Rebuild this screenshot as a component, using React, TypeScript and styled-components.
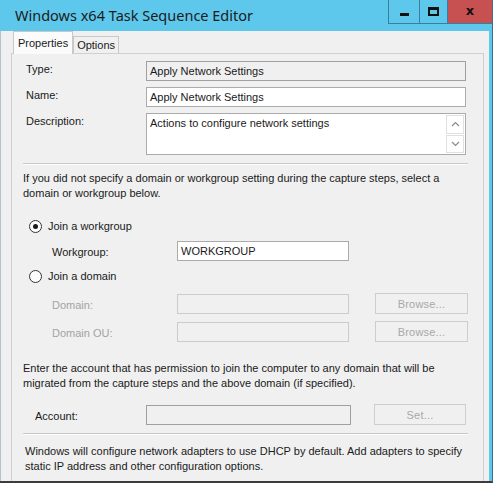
import React from 'react';
import styled, { createGlobalStyle } from 'styled-components';

const GlobalStyle = createGlobalStyle`
  html, body {
    margin: 0;
    padding: 0;
    background: #ffffff;
  }
  body {
    font-family: 'Liberation Sans', Arial, sans-serif;
    font-size: 11px;
    color: #1a1a1a;
  }
`;

const Window = styled.div`
  width: 492px;
  height: 481px;
  display: flex;
  flex-direction: column;
  background: #5ec8ec;
  border-right: 1px solid #3b6f86;
  border-bottom: 2px solid #3c3c3c;
  overflow: hidden;
`;

const TitleBar = styled.div`
  height: 31px;
  display: flex;
  align-items: flex-start;
  justify-content: space-between;
  flex-shrink: 0;
`;

const Title = styled.div`
  font-family: 'Noto Sans', 'Open Sans', sans-serif;
  font-size: 14.5px;
  line-height: 31px;
  padding-left: 15px;
  color: #1b1b1b;
`;

const Controls = styled.div`
  display: flex;
  flex-shrink: 0;
  height: 23px;
  border-left: 1px solid #3a7f9e;
  border-bottom: 1px solid #3a7f9e;
`;

const CtrlButton = styled.div<{ $w: number; $danger?: boolean }>`
  width: ${p => p.$w}px;
  flex-shrink: 0;
  height: 23px;
  display: flex;
  align-items: center;
  justify-content: center;
  background-color: ${p => (p.$danger ? '#c75050' : '#5ec8ec')};
  border-right: 1px solid #3a7f9e;
  &:last-child {
    border-right: none;
  }
`;

const MinGlyph = styled.div`
  width: 9px;
  height: 3px;
  margin-top: 5px;
  background: #111;
`;

const MaxGlyph = styled.div`
  width: 7px;
  height: 4px;
  border: 2px solid #111;
  border-top-width: 3px;
`;

const CloseGlyph = styled.div`
  font-family: 'DejaVu Sans', sans-serif;
  font-weight: 700;
  font-size: 13px;
  color: #111;
  line-height: 1;
  margin-top: -2px;
`;

const Body = styled.div`
  flex: 1;
  display: flex;
  flex-direction: column;
  background: #f0f0f0;
  border-left: 1px solid #b5c4cc;
  border-right: 3px solid #5ec8ec;
  padding: 0 5px 0 10px;
`;

const TabStrip = styled.div`
  display: flex;
  align-items: flex-end;
  height: 22px;
  padding-left: 2px;
`;

const Tab = styled.div<{ $active?: boolean }>`
  height: ${p => (p.$active ? 22 : 16)}px;
  padding: 0 ${p => (p.$active ? 4 : 3)}px;
  display: flex;
  align-items: center;
  border: 1px solid #c8c8c8;
  border-bottom: none;
  background: ${p => (p.$active ? '#fbfbfb' : '#f0f0f0')};
  margin-bottom: ${p => (p.$active ? -1 : 0)}px;
  position: relative;
  z-index: ${p => (p.$active ? 1 : 0)};
  color: #1a1a1a;
`;

const Panel = styled.div`
  flex: 1;
  border: 1px solid #d0d0d0;
  border-bottom: none;
  background: #f0f0f0;
  padding: 7px 15px 0 11px;
  display: flex;
  flex-direction: column;
`;

const FieldGrid = styled.div`
  display: grid;
  grid-template-columns: 120px 320px;
  row-gap: 6px;
  padding-left: 3px;
`;

const Label = styled.div<{ $disabled?: boolean }>`
  padding-top: 2px;
  color: ${p => (p.$disabled ? '#a3a3a3' : '#1a1a1a')};
`;

const TextBox = styled.div<{ $h?: number; $variant?: 'normal' | 'readonly' | 'disabled' }>`
  box-sizing: border-box;
  width: 100%;
  height: ${p => p.$h || 20}px;
  padding: 2px 3px;
  line-height: 14px;
  border: 1px solid
    ${p => (p.$variant === 'disabled' ? '#cccccc' : p.$variant === 'readonly' ? '#a0a0a0' : '#ababab')};
  background: ${p => (p.$variant === 'normal' || !p.$variant ? '#ffffff' : '#f0f0f0')};
  color: #1a1a1a;
`;

const TextArea = styled(TextBox)`
  display: flex;
  justify-content: space-between;
  padding: 2px 1px 1px 3px;
`;

const ScrollBar = styled.div`
  width: 18px;
  display: flex;
  flex-direction: column;
  gap: 1px;
  margin-top: -1px;
`;

const ScrollBtn = styled.div`
  flex: 1;
  display: flex;
  align-items: center;
  justify-content: center;
  border: 1px solid #e0e0e0;
  background: #ffffff;
`;

const Separator = styled.div<{ $top: number; $bottom: number }>`
  height: 1px;
  background: #c8c8c8;
  border-bottom: 1px solid #fcfcfc;
  margin: ${p => p.$top}px 0 ${p => p.$bottom}px 0;
`;

const Para = styled.p<{ $mt?: number; $indent?: number }>`
  margin: ${p => p.$mt || 0}px 0 0 ${p => p.$indent || 0}px;
  line-height: 14.5px;
  color: #1a1a1a;
`;

const RadioRow = styled.label<{ $mt: number }>`
  display: flex;
  align-items: center;
  gap: 6px;
  margin: ${p => p.$mt}px 0 0 6px;
  height: 14px;
`;

const RadioCircle = styled.span<{ $checked?: boolean }>`
  box-sizing: border-box;
  width: 13px;
  height: 13px;
  border-radius: 50%;
  border: 1px solid #333;
  background: #fff;
  display: flex;
  align-items: center;
  justify-content: center;
  &::after {
    content: '';
    width: 5px;
    height: 5px;
    border-radius: 50%;
    background: ${p => (p.$checked ? '#1a1a1a' : 'transparent')};
  }
`;

const SubGrid = styled.div<{ $mt: number }>`
  display: grid;
  grid-template-columns: 125px 172px 119px;
  row-gap: 7px;
  margin: ${p => p.$mt}px 0 0 29px;
  align-items: center;
`;

const AccountGrid = styled.div`
  display: grid;
  grid-template-columns: 111px 205px 115px;
  margin: 14px 0 0 12px;
  align-items: center;
`;

const Button = styled.div<{ $gap: number }>`
  box-sizing: border-box;
  height: 21px;
  margin-left: ${p => p.$gap}px;
  display: flex;
  align-items: center;
  justify-content: center;
  border: 1px solid #cdcdcd;
  background: #f0f0f0;
  color: #a8a8a8;
  letter-spacing: 0.2px;
`;

const Chevron: React.FC<{ up?: boolean }> = ({ up }) => (
  <svg width="9" height="6" viewBox="0 0 9 6">
    <path
      d={up ? 'M1 5 L4.5 1.5 L8 5' : 'M1 1 L4.5 4.5 L8 1'}
      fill="none"
      stroke="#8a8a8a"
      strokeWidth="1.2"
    />
  </svg>
);

const App: React.FC = () => {
  return (
    <>
      <GlobalStyle />
      <Window>
        <TitleBar>
          <Title>Windows x64 Task Sequence Editor</Title>
          <Controls>
            <CtrlButton $w={30}>
              <MinGlyph />
            </CtrlButton>
            <CtrlButton $w={27}>
              <MaxGlyph />
            </CtrlButton>
            <CtrlButton $w={44} $danger>
              <CloseGlyph>x</CloseGlyph>
            </CtrlButton>
          </Controls>
        </TitleBar>
        <Body>
          <TabStrip>
            <Tab $active>Properties</Tab>
            <Tab>Options</Tab>
          </TabStrip>
          <Panel>
            <FieldGrid>
              <Label>Type:</Label>
              <TextBox $variant="readonly">Apply Network Settings</TextBox>
              <Label>Name:</Label>
              <TextBox>Apply Network Settings</TextBox>
              <Label>Description:</Label>
              <TextArea $h={42}>
                <span>Actions to configure network settings</span>
                <ScrollBar>
                  <ScrollBtn>
                    <Chevron up />
                  </ScrollBtn>
                  <ScrollBtn>
                    <Chevron />
                  </ScrollBtn>
                </ScrollBar>
              </TextArea>
            </FieldGrid>

            <Separator $top={8} $bottom={6} />

            <Para>
              If you did not specify a domain or workgroup setting during the capture steps, select a
              domain or workgroup below.
            </Para>

            <RadioRow $mt={19}>
              <RadioCircle $checked />
              Join a workgroup
            </RadioRow>
            <SubGrid $mt={8}>
              <Label>Workgroup:</Label>
              <TextBox>WORKGROUP</TextBox>
            </SubGrid>
            <RadioRow $mt={8}>
              <RadioCircle />
              Join a domain
            </RadioRow>
            <SubGrid $mt={10}>
              <Label $disabled>Domain:</Label>
              <TextBox $variant="disabled" />
              <Button $gap={26}>Browse...</Button>
              <Label $disabled>Domain OU:</Label>
              <TextBox $variant="disabled" />
              <Button $gap={26}>Browse...</Button>
            </SubGrid>

            <Para $mt={19}>
              Enter the account that has permission to join the computer to any domain that will be
              migrated from the capture steps and the above domain (if specified).
            </Para>

            <AccountGrid>
              <Label>Account:</Label>
              <TextBox $variant="readonly" />
              <Button $gap={23}>Set...</Button>
            </AccountGrid>

            <Separator $top={8} $bottom={9} />

            <Para $indent={2}>
              Windows will configure network adapters to use DHCP by default. Add adapters to specify
              static IP address and other configuration options.
            </Para>
          </Panel>
        </Body>
      </Window>
    </>
  );
};

export default App;
